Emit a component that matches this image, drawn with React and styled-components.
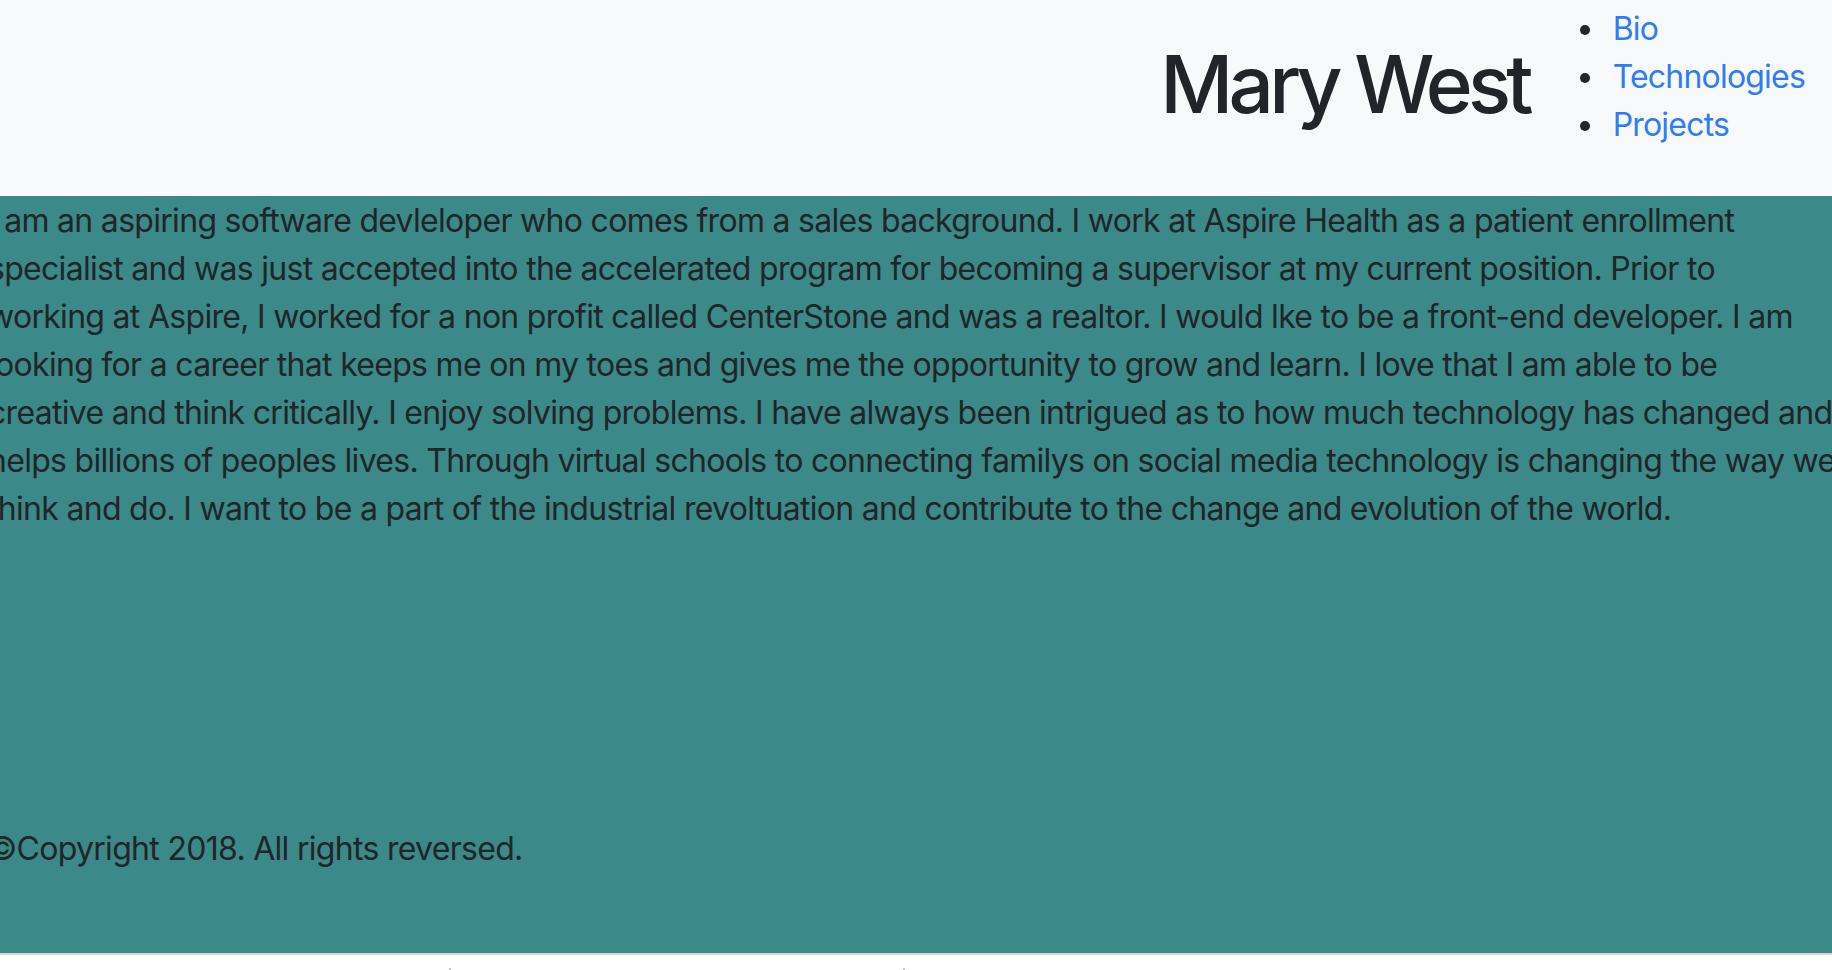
import styled, { createGlobalStyle } from "styled-components";

const GlobalStyle = createGlobalStyle`
    html, body {
        margin: 0;
        padding: 0;
        overflow-x: hidden;
        background: #ffffff;
        font-family: Inter, "Noto Sans", "Liberation Sans", sans-serif;
        color: #212529;
    }
`

const Page = styled.div`
    width: 1832px;
    overflow: hidden;
`

const Header = styled.header`
    height: 196px;
    background-color: #f8f9fa;
    display: flex;
    justify-content: flex-end;
    align-items: flex-start;
    padding-right: 27px;
`

const Title = styled.h1`
    margin: 36px 0 0;
    font-size: 80px;
    line-height: 96px;
    font-weight: 500;
    letter-spacing: -4.8px;
    color: #212529;
`

const NavList = styled.ul`
    margin: 5px 0 0;
    padding-left: 78px;
    font-size: 32px;
    line-height: 48px;
    letter-spacing: -0.8px;
    color: #212529;
`

const NavItem = styled.li`
    padding-left: 6px;
`

const NavLink = styled.a`
    color: #2f7cf6;
    text-decoration: none;
`

const Main = styled.main`
    height: 759px;
    box-sizing: border-box;
    background-color: #3b8989;
    border-bottom: 2px solid #d6d6d6;
    display: flex;
    flex-direction: column;
    padding-top: 1px;
    padding-bottom: 80px;
`

const Row = styled.div`
    margin: 0 -12px;
    font-size: 32px;
    line-height: 48px;
    letter-spacing: -0.7px;
`

const Bio = styled.p`
    margin: 0;
`

// keeps the wrapping the same as in the original page
const Line = styled.span`
    display: block;
    white-space: nowrap;
`

const Footer = styled(Row)`
    margin-top: auto;
`

const Below = styled.div`
    height: 15px;
    position: relative;
`

const Tick = styled.span`
    position: absolute;
    bottom: 0;
    width: 2px;
    height: 2px;
    background: #c8c8c8;
`

const links = ["Bio", "Technologies", "Projects"]

const bio = [
    "I am an aspiring software devleloper who comes from a sales background. I work at Aspire Health as a patient enrollment",
    "specialist and was just accepted into the accelerated program for becoming a supervisor at my current position. Prior to",
    "working at Aspire, I worked for a non profit called CenterStone and was a realtor. I would lke to be a front-end developer. I am",
    "looking for a career that keeps me on my toes and gives me the opportunity to grow and learn. I love that I am able to be",
    "creative and think critically. I enjoy solving problems. I have always been intrigued as to how much technology has changed and",
    "helps billions of peoples lives. Through virtual schools to connecting familys on social media technology is changing the way we",
    "think and do. I want to be a part of the industrial revoltuation and contribute to the change and evolution of the world.",
]

function App() {
    return (
        <Page>
            <GlobalStyle />
            <Header>
                <Title>Mary West</Title>
                <NavList>
                    {links.map((l) => (
                        <NavItem key={l}><NavLink href="#">{l}</NavLink></NavItem>
                    ))}
                </NavList>
            </Header>
            <Main>
                <Row>
                    <Bio>
                        {bio.map((line, i) => (
                            <Line key={i}>{line} </Line>
                        ))}
                    </Bio>
                </Row>
                <Footer>
                    <Bio>©Copyright 2018. All rights reversed.</Bio>
                </Footer>
            </Main>
            <Below>
                <Tick style={{ left: 449 }} />
                <Tick style={{ left: 903 }} />
            </Below>
        </Page>
    )
}

export default App;
